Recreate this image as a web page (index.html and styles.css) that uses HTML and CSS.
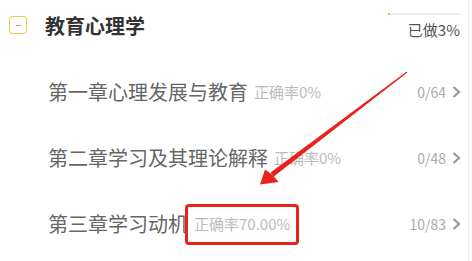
FILE: index.html
```html
<!DOCTYPE html>
<html lang="zh-CN">
<head>
<meta charset="utf-8">
<title>教育心理学</title>
<link rel="stylesheet" href="styles.css">
</head>
<body>
<div class="page">
  <div class="header">
    <span class="check"><span class="minus"></span></span>
    <h1 class="title">教育心理学</h1>
    <div class="progress">
      <div class="bar"><div class="fill" style="width:3%"></div></div>
      <div class="done">已做3%</div>
    </div>
  </div>
  <div class="row">
    <span class="name">第一章心理发展与教育</span>
    <span class="acc">正确率0%</span>
    <span class="meta"><span class="count">0/64</span><svg class="chev" width="10" height="12" viewBox="0 0 10 12"><path d="M2.5 1 L8 6 L2.5 11" fill="none" stroke="#999" stroke-width="2.2"/></svg></span>
  </div>
  <div class="row">
    <span class="name">第二章学习及其理论解释</span>
    <span class="acc">正确率0%</span>
    <span class="meta"><span class="count">0/48</span><svg class="chev" width="10" height="12" viewBox="0 0 10 12"><path d="M2.5 1 L8 6 L2.5 11" fill="none" stroke="#999" stroke-width="2.2"/></svg></span>
  </div>
  <div class="row">
    <span class="name">第三章学习动机</span>
    <span class="acc marked">正确率70.00%</span>
    <span class="meta"><span class="count">10/83</span><svg class="chev" width="10" height="12" viewBox="0 0 10 12"><path d="M2.5 1 L8 6 L2.5 11" fill="none" stroke="#999" stroke-width="2.2"/></svg></span>
  </div>
  <svg class="arrow" width="469" height="261" viewBox="0 0 469 261">
    <polygon points="406.7,71.6 407.4,72.4 273.8,176.4 270.6,172.4" fill="#e8231c"/>
    <polygon points="260,184.5 265,169.5 272.5,174.8 278.5,182" fill="#e8231c"/>
  </svg>
</div>
</body>
</html>
```

FILE: styles.css
```css
html, body {
  margin: 0;
  padding: 0;
  background: #fff;
}
body {
  font-family: "Noto Sans CJK SC", "Noto Sans", sans-serif;
}
.page {
  position: relative;
  width: 469px;
  height: 261px;
  border-right: 1px solid #ededed;
  box-sizing: border-box;
  overflow: hidden;
}
.header {
  display: flex;
  align-items: flex-start;
  height: 59px;
  padding: 0 7px 0 9px;
}
.check {
  width: 18px;
  height: 18px;
  margin-top: 16px;
  margin-right: 18px;
  border: 1.5px solid #f2c94c;
  border-radius: 3px;
  box-sizing: border-box;
  display: flex;
  align-items: center;
  justify-content: center;
}
.minus {
  width: 5px;
  height: 1px;
  background: #c9a64a;
}
.title {
  flex: 1;
  margin: 14px 0 0;
  font-size: 20px;
  line-height: 24px;
  font-weight: 700;
  color: #333;
}
.progress {
  display: flex;
  flex-direction: column;
  align-items: flex-end;
  width: 73px;
  padding-top: 13px;
}
.bar {
  width: 73px;
  height: 2px;
  background: #ececec;
}
.fill {
  height: 2px;
  background: #f5b82e;
}
.done {
  margin-top: 5px;
  margin-right: 1px;
  font-size: 15px;
  line-height: 20px;
  color: #555;
  white-space: nowrap;
}
.row {
  display: flex;
  align-items: center;
  height: 66px;
  padding: 0 7px 0 48px;
}
.name {
  font-size: 20px;
  line-height: 24px;
  color: #666;
  white-space: nowrap;
}
.acc {
  display: inline-block;
  margin-left: 6px;
  font-size: 15px;
  line-height: 20px;
  color: #bbb;
  white-space: nowrap;
}
.marked {
  position: relative;
}
.marked::after {
  content: "";
  position: absolute;
  left: -9px;
  right: -9px;
  top: -10px;
  bottom: -11px;
  border: 3px solid #e8231c;
  border-radius: 4px;
}
.meta {
  margin-left: auto;
  display: flex;
  align-items: center;
  gap: 5px;
}
.count {
  font-size: 14px;
  line-height: 20px;
  color: #aaa;
}
.chev {
  display: block;
}
.arrow {
  position: absolute;
  left: 0;
  top: 0;
  pointer-events: none;
}
```
